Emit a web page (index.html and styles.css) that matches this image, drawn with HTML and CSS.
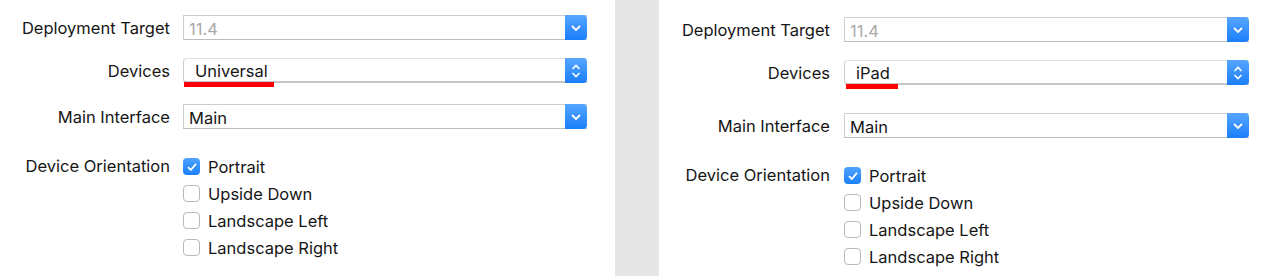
FILE: index.html
```html
<!DOCTYPE html>
<html lang="en">
<head>
    <meta charset="UTF-8">
    <title>Deployment Info</title>
    <link rel="stylesheet" href="styles.css">
</head>
<body>
    <div class="screen">
        <!-- 左侧：Universal -->
        <section class="panel panel-left">
            <div class="row">
                <span class="label">Deployment Target</span>
                <div class="combo">
                    <span class="value muted">11.4</span>
                    <span class="arrow">
                        <svg width="12" height="8" viewBox="0 0 12 8"><path d="M2 2 L6 6 L10 2" fill="none" stroke="#fff" stroke-width="1.8"/></svg>
                    </span>
                </div>
            </div>
            <div class="row row-devices">
                <span class="label">Devices</span>
                <div class="combo popup">
                    <span class="value">Universal</span>
                    <span class="arrow">
                        <svg width="12" height="16" viewBox="0 0 12 16"><path d="M2.5 6 L6 2.5 L9.5 6 M2.5 10 L6 13.5 L9.5 10" fill="none" stroke="#fff" stroke-width="1.6"/></svg>
                    </span>
                    <span class="mark mark-universal"></span>
                </div>
            </div>
            <div class="row row-main">
                <span class="label">Main Interface</span>
                <div class="combo">
                    <span class="value">Main</span>
                    <span class="arrow">
                        <svg width="12" height="8" viewBox="0 0 12 8"><path d="M2 2 L6 6 L10 2" fill="none" stroke="#fff" stroke-width="1.8"/></svg>
                    </span>
                </div>
            </div>
            <div class="row row-orient">
                <span class="label">Device Orientation</span>
                <ul class="checks">
                    <li><span class="box checked"><svg width="12" height="10" viewBox="0 0 12 10"><path d="M2 5.2 L4.8 8 L10 1.8" fill="none" stroke="#fff" stroke-width="1.8"/></svg></span>Portrait</li>
                    <li><span class="box"></span>Upside Down</li>
                    <li><span class="box"></span>Landscape Left</li>
                    <li><span class="box"></span>Landscape Right</li>
                </ul>
            </div>
        </section>

        <div class="divider"></div>

        <!-- 右侧：iPad -->
        <section class="panel panel-right">
            <div class="row">
                <span class="label">Deployment Target</span>
                <div class="combo">
                    <span class="value muted">11.4</span>
                    <span class="arrow">
                        <svg width="12" height="8" viewBox="0 0 12 8"><path d="M2 2 L6 6 L10 2" fill="none" stroke="#fff" stroke-width="1.8"/></svg>
                    </span>
                </div>
            </div>
            <div class="row row-devices">
                <span class="label">Devices</span>
                <div class="combo popup">
                    <span class="value">iPad</span>
                    <span class="arrow">
                        <svg width="12" height="16" viewBox="0 0 12 16"><path d="M2.5 6 L6 2.5 L9.5 6 M2.5 10 L6 13.5 L9.5 10" fill="none" stroke="#fff" stroke-width="1.6"/></svg>
                    </span>
                    <span class="mark mark-ipad"></span>
                </div>
            </div>
            <div class="row row-main">
                <span class="label">Main Interface</span>
                <div class="combo">
                    <span class="value">Main</span>
                    <span class="arrow">
                        <svg width="12" height="8" viewBox="0 0 12 8"><path d="M2 2 L6 6 L10 2" fill="none" stroke="#fff" stroke-width="1.8"/></svg>
                    </span>
                </div>
            </div>
            <div class="row row-orient">
                <span class="label">Device Orientation</span>
                <ul class="checks">
                    <li><span class="box checked"><svg width="12" height="10" viewBox="0 0 12 10"><path d="M2 5.2 L4.8 8 L10 1.8" fill="none" stroke="#fff" stroke-width="1.8"/></svg></span>Portrait</li>
                    <li><span class="box"></span>Upside Down</li>
                    <li><span class="box"></span>Landscape Left</li>
                    <li><span class="box"></span>Landscape Right</li>
                </ul>
            </div>
        </section>
    </div>
</body>
</html>
```

FILE: styles.css
```css
body {
    margin: 0;
    background-color: #ffffff;
    font-family: Inter, "Liberation Sans", Arial, sans-serif;
    font-size: 16.5px;
    color: #161616;
}

.screen {
    display: flex;
    height: 276px;
    overflow: hidden;
}

.panel {
    background-color: #ffffff;
}

.panel-left {
    width: 615px;
    padding: 15px 28px 0 0;
    box-sizing: border-box;
}

.panel-right {
    flex: 1;
    padding: 17px 31px 0 0;
    box-sizing: border-box;
}

.divider {
    width: 44px;
    background-color: #e6e6e6;
}

.row {
    display: grid;
    grid-template-columns: 170px 1fr;
    column-gap: 13px;
    align-items: center;
}

.panel-right .row {
    grid-template-columns: 171px 1fr;
    column-gap: 14px;
}

.row-devices {
    margin-top: 18px;
}

.row-main {
    margin-top: 21px;
}

.panel-right .row-main {
    margin-top: 28px;
}

.row-orient {
    margin-top: 24px;
    align-items: start;
}

.label {
    text-align: right;
    padding-top: 2px;
    line-height: 23px;
    white-space: nowrap;
}

.row-orient .label {
    padding-top: 0;
    line-height: 27px;
}

.combo {
    position: relative;
    display: flex;
    height: 25px;
    box-sizing: border-box;
    border: 1px solid #cdcdcd;
    border-bottom-color: #bdbdbd;
    border-right: none;
    background-color: #ffffff;
}

.combo.popup {
    border-radius: 4px 0 0 4px;
    border-top-color: #e2e2e2;
    border-bottom-color: #c6c6c6;
    border-bottom-width: 2px;
}

.value {
    flex: 1;
    padding: 2px 0 0 5px;
    line-height: 22px;
}

.popup .value {
    padding-left: 11px;
    line-height: 20px;
}

.muted {
    color: #a9a9a9;
}

.arrow {
    width: 22px;
    margin: -1px 0 -1px 0;
    border-radius: 0 4px 4px 0;
    background: linear-gradient(#56a6ff, #1a7ef9);
    display: flex;
    align-items: center;
    justify-content: center;
}

.popup .arrow {
    margin-bottom: -2px;
}

.mark {
    position: absolute;
    top: 23px;
    height: 5px;
    background-color: #ff0000;
}

.mark-universal {
    left: 0;
    width: 90px;
}

.mark-ipad {
    left: 1px;
    width: 52px;
}

.checks {
    list-style: none;
    margin: 0;
    padding: 0;
}

.checks li {
    display: flex;
    align-items: center;
    height: 27px;
}

.box {
    width: 17px;
    height: 17px;
    box-sizing: border-box;
    border: 1px solid #b9b9b9;
    border-radius: 4px;
    background-color: #ffffff;
    margin-right: 8px;
    display: flex;
    align-items: center;
    justify-content: center;
}

.box.checked {
    border: none;
    background: linear-gradient(#4ea3ff, #1b80f9);
}
```
